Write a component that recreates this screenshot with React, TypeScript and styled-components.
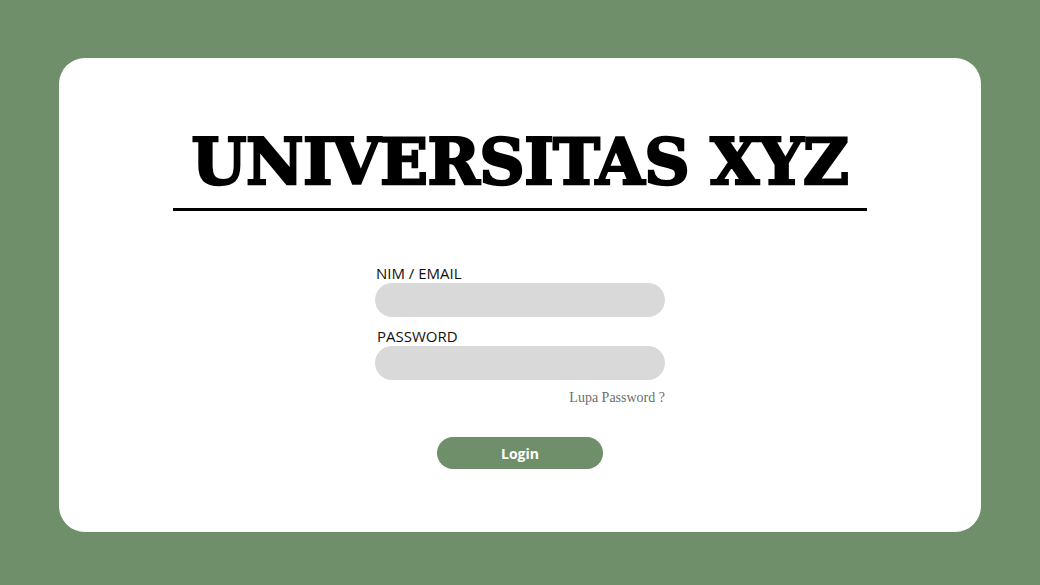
import React from "react";
import styled, { createGlobalStyle } from "styled-components";

const Global = createGlobalStyle`
  html, body { margin: 0; padding: 0; }
  body { background: #6f8f6b; width: 1040px; height: 585px; overflow: hidden; font-family: "Open Sans", sans-serif; }
`;

const Page = styled.div`
  width: 1040px;
  height: 585px;
  padding: 58px 59px 53px 59px;
  box-sizing: border-box;
  display: flex;
`;

const Card = styled.div`
  flex: 1;
  background: #ffffff;
  border-radius: 26px;
  display: flex;
  flex-direction: column;
  align-items: center;
  padding-top: 73px;
`;

const Title = styled.h1`
  margin: 0;
  font-family: "DejaVu Serif", serif;
  font-weight: 900;
  font-size: 63px;
  line-height: 63px;
  color: #000;
  -webkit-text-stroke: 2.4px #000;
  letter-spacing: -0.6px;
  white-space: nowrap;
`;

const Rule = styled.div`
  width: 694px;
  height: 3px;
  background: #000;
  margin-top: 14px;
`;

const Form = styled.form`
  width: 290px;
  display: flex;
  flex-direction: column;
  margin-top: 53px;
`;

const Label = styled.label<{ $indent?: number }>`
  font-family: "Open Sans", sans-serif;
  font-size: 15px;
  line-height: 19px;
  color: #111;
  padding-left: ${(p) => p.$indent ?? 1}px;
`;

const Input = styled.input`
  height: 34px;
  border: none;
  border-radius: 17px;
  background: #d9d9d9;
  outline: none;
  padding: 0 14px;
  margin-bottom: 10px;
`;

const Forgot = styled.a`
  align-self: flex-end;
  font-family: "Liberation Serif", serif;
  font-size: 14px;
  color: #6e6e6e;
  text-decoration: none;
`;

const Button = styled.button`
  align-self: center;
  width: 166px;
  height: 32px;
  border: none;
  border-radius: 16px;
  background: #6f8f6b;
  color: #fff;
  font-family: "Open Sans", sans-serif;
  font-weight: 700;
  font-size: 14px;
  margin-top: 31px;
`;

export default function App() {
  return (
    <>
      <Global />
      <Page>
        <Card>
          <Title>UNIVERSITAS XYZ</Title>
          <Rule />
          <Form onSubmit={(e) => e.preventDefault()}>
            <Label>NIM / EMAIL</Label>
            <Input type="text" />
            <Label $indent={2}>PASSWORD</Label>
            <Input type="password" />
            <Forgot href="#">Lupa Password ?</Forgot>
            <Button type="submit">Login</Button>
          </Form>
        </Card>
      </Page>
    </>
  );
}
